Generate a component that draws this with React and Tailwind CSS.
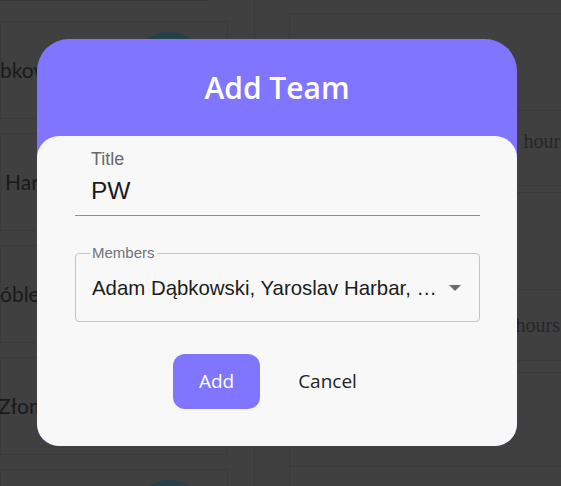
import React from "react";

const names = [
  { t: "bkowski", ml: "-ml-[1px]" },
  { t: "Harbar", ml: "ml-[4px]" },
  { t: "óblewski", ml: "-ml-[1px]" },
  { t: "Złomski", ml: "-ml-[3px]" },
  { t: "", ml: "" },
];

function Background() {
  return (
    <div className="flex h-[486px] w-[561px] overflow-hidden bg-[#404040]">
      <div className="flex w-[255px] shrink-0 flex-col border-r border-[#3a3a3a]">
        <div className="h-[2px] w-[208px] border-b border-[#353535]" />
        <div className="flex flex-col gap-[14px] pt-[20px]">
          {names.map((n, i) => (
            <div
              key={i}
              className="flex h-[98px] w-[228px] shrink-0 items-center border border-[#3a3a3a]"
            >
              <span
                className={`${n.ml} whitespace-pre text-[21px] leading-[26px] text-[#1a1a1a]`}
                style={{ fontFamily: "Lato, 'Noto Sans', sans-serif" }}
              >
                {n.t}
              </span>
              <div className="ml-auto mr-[20px] h-[76px] w-[76px] rounded-full border-[7px] border-[#24404a] bg-[#3a3a3a]" />
            </div>
          ))}
        </div>
      </div>
      <div className="flex flex-1 flex-col pl-[34px] pt-[13px]">
        <div className="h-[98px] border-l border-t border-[#3a3a3a]" />
        <div
          className="flex h-[76px] items-center justify-end border-l border-t border-[#3a3a3a] pb-[14px] text-[20px] text-[#262626]"
          style={{ fontFamily: "'Liberation Serif', serif" }}
        >
          <span className="-mr-[7px]">hours</span>
        </div>
        <div className="h-[8px] border-l border-t border-[#3a3a3a]" />
        <div className="h-[98px] border-l border-t border-[#3a3a3a]" />
        <div
          className="flex h-[72px] items-center justify-end border-l border-t border-[#3a3a3a] text-[20px] text-[#262626]"
          style={{ fontFamily: "'Liberation Serif', serif" }}
        >
          <span className="mr-[1px]">hours</span>
        </div>
        <div className="h-[12px] border-l border-t border-[#3a3a3a]" />
        <div className="h-[96px] border-l border-t border-[#3a3a3a]" />
        <div className="h-[20px] border-l border-t border-[#3a3a3a]" />
      </div>
    </div>
  );
}

function Modal() {
  return (
    <div className="absolute left-[37px] top-[39px] flex h-[407px] w-[480px] flex-col rounded-b-[22px] rounded-t-[32px] bg-[#8075ff]">
      <div
        className="flex h-[97px] shrink-0 items-center justify-center text-[30px] font-semibold text-white"
        style={{ fontFamily: "'Open Sans', 'Noto Sans', sans-serif" }}
      >
        Add Team
      </div>
      <div
        className="flex flex-1 flex-col rounded-[22px] bg-[#f8f8f8] pb-[37px] pl-[38px] pr-[37px] pt-[12px]"
        style={{ fontFamily: "'Liberation Sans', Arial, sans-serif" }}
      >
        <div className="flex flex-col border-b border-[#8f8f8f] pb-[10px] pl-[16px]">
          <span className="text-[18px] leading-[22px] text-[#686868]">Title</span>
          <span className="mt-[7px] text-[24.5px] leading-[28px] text-[#1c1c1c]">PW</span>
        </div>
        <div className="relative mt-[37px] flex h-[69px] items-center rounded-[4px] border border-[#c4c4c4] pl-[16px] pr-[18px]">
          <span className="absolute -top-[9px] left-[14px] bg-[#f8f8f8] px-[2px] text-[15px] leading-[15px] text-[#6e7282]">
            Members
          </span>
          <span className="text-[20.4px] leading-[24px] text-[#1c1c1c]">
            Adam Dąbkowski, Yaroslav Harbar, …
          </span>
          <svg
            className="ml-auto"
            width="12"
            height="6"
            viewBox="0 0 12 6"
          >
            <path d="M0 0 L12 0 L6 6 Z" fill="#6b6b6b" />
          </svg>
        </div>
        <div
          className="mt-[32px] flex justify-center gap-[13px]"
          style={{ fontFamily: "'Open Sans', 'Noto Sans', sans-serif" }}
        >
          <button className="flex h-[55px] w-[87px] items-center justify-center rounded-[12px] bg-[#8075ff] text-[19px] text-white">
            Add
          </button>
          <button className="flex h-[55px] items-center px-[25px] text-[19px] text-[#222222]">
            Cancel
          </button>
        </div>
      </div>
    </div>
  );
}

export default function App() {
  return (
    <div className="relative h-[486px] w-[561px] overflow-hidden">
      <Background />
      <Modal />
    </div>
  );
}
